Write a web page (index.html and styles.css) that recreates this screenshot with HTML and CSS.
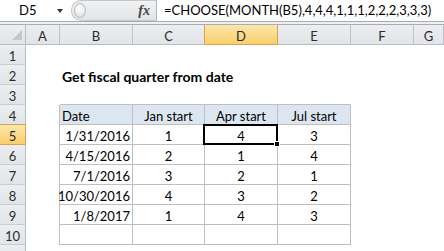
FILE: index.html
```html
<!DOCTYPE html>
<html lang="en">
<head>
    <meta charset="UTF-8">
    <title>Get fiscal quarter from date</title>
    <link rel="stylesheet" href="styles.css">
</head>
<body>
    <div class="formula-bar">
        <div class="name-box">D5</div>
        <div class="name-drop"></div>
        <div class="fx-box">
            <div class="grip"></div>
            <span class="fx">fx</span>
        </div>
        <div class="formula">=CHOOSE(MONTH(B5),4,4,4,1,1,1,2,2,2,3,3,3)</div>
    </div>
    <div class="bar-sep"></div>

    <div class="sheet">
        <!-- column headers -->
        <div class="corner"><span class="corner-mark"></span></div>
        <div class="ch">A</div>
        <div class="ch">B</div>
        <div class="ch">C</div>
        <div class="ch sel">D</div>
        <div class="ch">E</div>
        <div class="ch">F</div>
        <div class="ch">G</div>

        <!-- row 1 -->
        <div class="rh">1</div>
        <div class="c"></div><div class="c"></div><div class="c"></div><div class="c"></div>
        <div class="c"></div><div class="c"></div><div class="c"></div>

        <!-- row 2 -->
        <div class="rh">2</div>
        <div class="c"></div>
        <div class="c title">Get fiscal quarter from date</div>
        <div class="c"></div><div class="c"></div>

        <!-- row 3 -->
        <div class="rh">3</div>
        <div class="c"></div>
        <div class="c top"></div><div class="c top"></div><div class="c top"></div><div class="c top"></div>
        <div class="c"></div><div class="c"></div>

        <!-- row 4 -->
        <div class="rh">4</div>
        <div class="c edge"></div>
        <div class="t head lbl">Date</div>
        <div class="t head num">Jan start</div>
        <div class="t head num">Apr start</div>
        <div class="t head num">Jul start</div>
        <div class="c"></div><div class="c"></div>

        <!-- row 5 -->
        <div class="rh sel">5</div>
        <div class="c edge"></div>
        <div class="t date">1/31/2016</div>
        <div class="t num">1</div>
        <div class="t num active">4</div>
        <div class="t num">3</div>
        <div class="c"></div><div class="c"></div>

        <!-- row 6 -->
        <div class="rh">6</div>
        <div class="c edge"></div>
        <div class="t date">4/15/2016</div>
        <div class="t num">2</div>
        <div class="t num">1</div>
        <div class="t num">4</div>
        <div class="c"></div><div class="c"></div>

        <!-- row 7 -->
        <div class="rh">7</div>
        <div class="c edge"></div>
        <div class="t date">7/1/2016</div>
        <div class="t num">3</div>
        <div class="t num">2</div>
        <div class="t num">1</div>
        <div class="c"></div><div class="c"></div>

        <!-- row 8 -->
        <div class="rh">8</div>
        <div class="c edge"></div>
        <div class="t date">10/30/2016</div>
        <div class="t num">4</div>
        <div class="t num">3</div>
        <div class="t num">2</div>
        <div class="c"></div><div class="c"></div>

        <!-- row 9 -->
        <div class="rh">9</div>
        <div class="c edge"></div>
        <div class="t date">1/8/2017</div>
        <div class="t num">1</div>
        <div class="t num">4</div>
        <div class="t num">3</div>
        <div class="c"></div><div class="c"></div>

        <!-- row 10 -->
        <div class="rh">10</div>
        <div class="c edge"></div>
        <div class="t"></div><div class="t"></div><div class="t"></div><div class="t"></div>
        <div class="c"></div><div class="c"></div>

        <!-- row 11, only its top edge is in view -->
        <div class="rh"></div>
        <div class="c"></div><div class="c"></div><div class="c"></div><div class="c"></div>
        <div class="c"></div><div class="c"></div><div class="c"></div>
    </div>
</body>
</html>
```

FILE: styles.css
```css
body {
    margin: 0;
    width: 444px;
    height: 251px;
    overflow: hidden;
    background: #fff;
    color: #000;
    font-family: Lato, "Liberation Sans", sans-serif;
    font-size: 13px;
}

/* formula bar */

.formula-bar {
    display: flex;
    align-items: center;
    height: 21px;
    background: #fff;
}

.name-box {
    width: 38px;
    padding-left: 19px;
    line-height: 21px;
}

.name-drop {
    width: 0;
    height: 0;
    margin-right: 8px;
    border-left: 3.5px solid transparent;
    border-right: 3.5px solid transparent;
    border-top: 4px solid #333;
}

.fx-box {
    display: flex;
    align-items: center;
    box-sizing: border-box;
    width: 86px;
    height: 21px;
    background: linear-gradient(#f1f2f4, #e2e4e7);
    border: 1px solid #c3c7cc;
    border-right-color: #b5b5b5;
    border-radius: 10px 0 0 10px;
}

.grip {
    width: 10px;
    height: 13px;
    margin-left: 2px;
    border: 1px solid #b9bcc0;
    border-radius: 50%;
    background: radial-gradient(circle at 40% 35%, #fff, #d9dbde);
}

.fx {
    margin-left: auto;
    margin-right: 6px;
    font-family: "Liberation Serif", serif;
    font-style: italic;
    font-weight: bold;
    font-size: 14px;
    color: #444;
}

.formula {
    padding-left: 7px;
    white-space: nowrap;
    line-height: 21px;
}

.bar-sep {
    box-sizing: border-box;
    height: 4px;
    background: #eef0f2;
    border-top: 1px solid #a9adb2;
    border-bottom: 1px solid #a9adb2;
}

/* sheet grid */

.sheet {
    display: grid;
    grid-template-columns: 26px 34px 73px 72px 73px 73px 63px 30px;
    grid-auto-rows: 20px;
}

.sheet > div {
    box-sizing: border-box;
    display: flex;
    align-items: flex-end;
    line-height: 16px;
    white-space: nowrap;
}

.corner,
.ch,
.rh {
    background: linear-gradient(#eceef1, #e1e4e8);
    color: #2b2b2b;
    justify-content: center;
}

.corner {
    border-right: 1px solid #b8bdc3;
    border-bottom: 1px solid #b8bdc3;
}

.sheet > .corner {
    align-items: flex-end;
    justify-content: flex-end;
    padding: 0 3px 4px 0;
}

.corner-mark {
    width: 10px;
    height: 10px;
    background: #c4c7cb;
    clip-path: polygon(100% 0, 100% 100%, 0 100%);
}

.ch {
    border-right: 1px solid #bcc1c7;
    border-bottom: 1px solid #b8bdc3;
}

.rh {
    border-right: 1px solid #b8bdc3;
    border-bottom: 1px solid #c9cdd2;
}

.ch.sel,
.rh.sel {
    background: linear-gradient(#fce6ad, #f8cf6a);
    border-color: #d6a451;
}

.ch.sel {
    box-shadow: -1px 0 0 #d6a451;
}

.rh.sel {
    box-shadow: 0 -1px 0 #d6a451;
}

/* cells */

.c.top {
    border-bottom: 1px solid #bfbfbf;
}

.c.edge {
    border-right: 1px solid #bfbfbf;
}

.title {
    grid-column: span 4;
    padding-left: 2px;
    font-weight: bold;
    font-size: 14px;
}

.t {
    border-right: 1px solid #bfbfbf;
    border-bottom: 1px solid #bfbfbf;
}

.t.head {
    background: #dce6f1;
}

.lbl {
    padding-left: 2px;
}

.sheet > .num {
    justify-content: center;
}

.sheet > .date {
    justify-content: flex-end;
    padding-right: 2px;
}

.active {
    position: relative;
    z-index: 1;
}

.active::after {
    content: "";
    position: absolute;
    top: -1px;
    left: -2px;
    right: -1px;
    bottom: -1px;
    border: 2px solid #000;
}

.active::before {
    content: "";
    position: absolute;
    right: -3px;
    bottom: -3px;
    width: 4px;
    height: 4px;
    background: #000;
    border: 1px solid #fff;
    z-index: 2;
}
```
